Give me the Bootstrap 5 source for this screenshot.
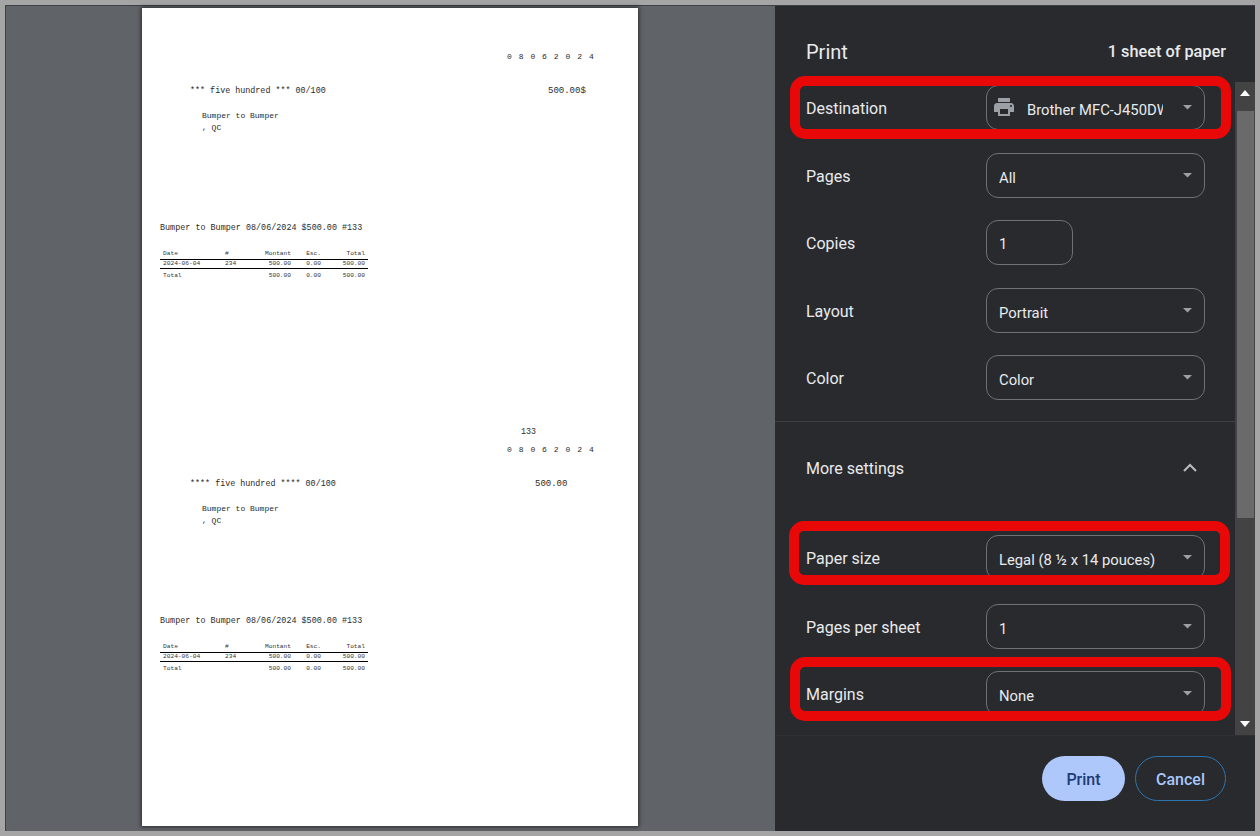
<!DOCTYPE html>
<html lang="en">
<head>
<meta charset="utf-8">
<title>Print</title>
<link href="https://cdn.jsdelivr.net/npm/bootstrap@5.3.0/dist/css/bootstrap.min.css" rel="stylesheet">
<style>
html, body { height: 100%; overflow: hidden; }
body { background: #a5a5a5; padding: 5px; font-family: Roboto, "Liberation Sans", sans-serif; }
.pv-window { height: 826px; width: 1250px; border-top: 1px solid #3d4045; border-left: 1px solid #3d4045; }
.pv-preview { width: 769px; background: #606368; padding-top: 2px; }
.pv-paper { width: 496px; height: 818px; margin-left: 136px; background: #fff; box-shadow: 0 0 4px 1px rgba(0,0,0,.55); padding-top: 25px; color: #2b2b2b; font-family: "Liberation Mono", "Courier New", monospace; font-size: 8.4px; line-height: 12px; }
.pv-check { height: 393px; }
.pv-num { height: 12px; padding-left: 379px; font-size: 8.3px; }
.pv-date { height: 12px; margin-top: 6px; padding-left: 365px; letter-spacing: 6.9px; font-size: 8px; white-space: pre; }
.pv-amount { margin-top: 22px; height: 12px; }
.pv-words { margin-left: 48px; width: 346px; }
.pv-sum1 { margin-left: 12px; font-size: 9px; }
.pv-sum2 { margin-left: -1px; font-size: 9px; }
.pv-to { margin-top: 13px; margin-left: 60px; height: 25px; line-height: 12px; font-size: 8px; }
.pv-memo { margin-top: 87px; margin-left: 18px; height: 12px; letter-spacing: .03px; }
.pv-table { margin: 16px 0 0 18px; width: 208px; table-layout: fixed; border-collapse: collapse; font-size: 6.2px; line-height: 8px; color: #333; }
.pv-table td, .pv-table th { padding: 0 3px; font-weight: 400; white-space: nowrap; height: 8.4px; }
.pv-table tbody tr { border-top: 1.4px solid #000; border-bottom: 1.4px solid #000; }
.pv-table thead th { padding-bottom: 1px; }
.pv-table tfoot td { padding-top: 3px; }
.pv-c1 { width: 62px; } .pv-c2 { width: 28px; } .pv-c3 { width: 44px; } .pv-c4 { width: 30px; } .pv-c5 { width: 44px; }
.pv-side { width: 480px; background: #292a2e; color: #e8eaed; }
.pv-head { height: 76px; padding: 29px 29px 0 31px; }
.pv-title { font-size: 20px; line-height: 34px; font-weight: 400; margin: 0; }
.pv-sheets { font-size: 16.3px; font-weight: 500; line-height: 34px; }
.pv-main { height: 654px; }
.pv-form { width: 460px; padding: 3.4px 30px 0 31px; }
.pv-row { height: 45px; margin-bottom: 22.5px; }
.pv-row label { width: 180px; font-size: 16px; line-height: 20px; margin: 0; padding-top: 3px; color: #e8eaed; }
.pv-row-paper { margin-bottom: 24px; }
.pv-row-sheet { margin-bottom: 22px; }
.pv-field { width: 219px; }
.pv-select.form-select, .pv-input.form-control { background-color: transparent; color: #e8eaed; border: 1px solid #6f7175; border-radius: 12px; height: 45px; font-family: Roboto, "Liberation Sans", sans-serif; font-size: 14.8px; padding: 5px 41px 0 12px; box-shadow: none; }
.pv-select.form-select { background-image: url("data:image/svg+xml,%3Csvg xmlns='http://www.w3.org/2000/svg' width='9' height='5'%3E%3Cpath d='M0 0h9L4.5 4.5z' fill='%239aa0a6'/%3E%3C/svg%3E"); background-repeat: no-repeat; background-position: right 12px top 19px; background-size: 9px 5px; }
.pv-select option { background: #292a2e; color: #e8eaed; }
.pv-select-icon.form-select { padding-left: 40px; }
.pv-input.form-control { width: 87px; padding: 2px 8px 0 12px; }
.pv-printer { position: absolute; left: 6px; top: 10px; width: 24px; height: 24px; fill: #9aa0a6; pointer-events: none; }
.pv-rule { margin: 21px -30px 0 -31px; border-top: 1px solid #3f4044; opacity: 1; }
.pv-more-inner { height: 113px; padding-bottom: 21px; }
.pv-more-inner span { font-size: 16px; padding-top: 2px; }
.pv-chev { width: 14px; height: 9px; margin: 0 8px 2px 0; fill: none; stroke: #b9bcc0; stroke-width: 2; }
.pv-mark { position: absolute; border: 10px solid #e80808; border-radius: 15px; z-index: 3; pointer-events: none; }
.pv-mark-a { left: -16px; right: -26px; top: -9px; height: 63px; }
.pv-mark-b { left: -17px; right: -25px; top: -14px; height: 64px; }
.pv-mark-c { left: -16px; right: -26px; top: -14px; height: 64px; }
.pv-bar { width: 20px; background: #434343; }
.pv-bar-btn { height: 29px; padding-top: 8px; }
.pv-bar-btn-b { height: 23px; margin-top: auto; padding-top: 9px; }
.pv-tri-up, .pv-tri-down { display: block; width: 0; height: 0; margin: 0 auto; border-left: 5px solid transparent; border-right: 5px solid transparent; }
.pv-tri-up { border-bottom: 6px solid #fff; }
.pv-tri-down { border-top: 6px solid #fff; }
.pv-thumb { height: 407px; margin: 0 1px 0 2px; background: #6a6a6a; }
.pv-foot { height: 96px; padding: 20px 29px 0 0; border-top: 1px solid #2f3034; gap: 10px; }
.pv-btn-print.btn, .pv-btn-cancel.btn { height: 45px; border-radius: 23px; font-size: 16px; font-weight: 500; padding: 3px 0 0; font-family: Roboto, "Liberation Sans", sans-serif; }
.pv-btn-print.btn { width: 83px; background: #aec8fb; color: #1f3b75; border: 0; }
.pv-btn-cancel.btn { width: 91px; background: transparent; color: #a8c7fa; border: 1px solid #2f74ad; }
</style>
</head>
<body>
<div class="pv-window d-flex">
  <div class="pv-preview">
    <div class="pv-paper">
      <div class="pv-check">
        <div class="pv-num"></div>
        <div class="pv-date">08062024</div>
        <div class="pv-amount d-flex"><span class="pv-words">*** five hundred *** 00/100</span><span class="pv-sum1">500.00$</span></div>
        <div class="pv-to">Bumper to Bumper<br>, QC</div>
        <div class="pv-memo">Bumper to Bumper 08/06/2024 $500.00 #133</div>
        <table class="pv-table">
          <colgroup><col class="pv-c1"><col class="pv-c2"><col class="pv-c3"><col class="pv-c4"><col class="pv-c5"></colgroup>
          <thead><tr><th>Date</th><th>#</th><th class="text-end">Montant</th><th class="text-end">Esc.</th><th class="text-end">Total</th></tr></thead>
          <tbody><tr><td>2024-06-04</td><td>234</td><td class="text-end">500.00</td><td class="text-end">0.00</td><td class="text-end">500.00</td></tr></tbody>
          <tfoot><tr><td>Total</td><td></td><td class="text-end">500.00</td><td class="text-end">0.00</td><td class="text-end">500.00</td></tr></tfoot>
        </table>
      </div>
      <div class="pv-check">
        <div class="pv-num">133</div>
        <div class="pv-date">08062024</div>
        <div class="pv-amount d-flex"><span class="pv-words">**** five hundred **** 00/100</span><span class="pv-sum2">500.00</span></div>
        <div class="pv-to">Bumper to Bumper<br>, QC</div>
        <div class="pv-memo">Bumper to Bumper 08/06/2024 $500.00 #133</div>
        <table class="pv-table">
          <colgroup><col class="pv-c1"><col class="pv-c2"><col class="pv-c3"><col class="pv-c4"><col class="pv-c5"></colgroup>
          <thead><tr><th>Date</th><th>#</th><th class="text-end">Montant</th><th class="text-end">Esc.</th><th class="text-end">Total</th></tr></thead>
          <tbody><tr><td>2024-06-04</td><td>234</td><td class="text-end">500.00</td><td class="text-end">0.00</td><td class="text-end">500.00</td></tr></tbody>
          <tfoot><tr><td>Total</td><td></td><td class="text-end">500.00</td><td class="text-end">0.00</td><td class="text-end">500.00</td></tr></tfoot>
        </table>
      </div>
    </div>
  </div>
  <div class="pv-side d-flex flex-column">
    <div class="pv-head d-flex justify-content-between">
      <h1 class="pv-title">Print</h1>
      <span class="pv-sheets">1 sheet of paper</span>
    </div>
    <div class="pv-main d-flex">
      <div class="pv-form">
        <div class="pv-row d-flex align-items-center position-relative">
          <label>Destination</label>
          <div class="pv-field position-relative">
            <select class="form-select pv-select pv-select-icon"><option>Brother MFC-J450DW</option></select>
            <svg class="pv-printer" viewBox="0 0 24 24"><path d="M19 8H5c-1.66 0-3 1.34-3 3v6h4v4h12v-4h4v-6c0-1.66-1.34-3-3-3zm-3 11H8v-5h8v5zm3-7c-.55 0-1-.45-1-1s.45-1 1-1 1 .45 1 1-.45 1-1 1zm-1-9H6v4h12V3z"/></svg>
          </div>
          <div class="pv-mark pv-mark-a"></div>
        </div>
        <div class="pv-row d-flex align-items-center">
          <label>Pages</label>
          <div class="pv-field"><select class="form-select pv-select"><option>All</option></select></div>
        </div>
        <div class="pv-row d-flex align-items-center">
          <label>Copies</label>
          <div class="pv-field"><input class="form-control pv-input" value="1"></div>
        </div>
        <div class="pv-row d-flex align-items-center">
          <label>Layout</label>
          <div class="pv-field"><select class="form-select pv-select"><option>Portrait</option></select></div>
        </div>
        <div class="pv-row d-flex align-items-center mb-0">
          <label>Color</label>
          <div class="pv-field"><select class="form-select pv-select"><option>Color</option></select></div>
        </div>
        <hr class="pv-rule">
        <div class="pv-more-inner d-flex align-items-center justify-content-between">
          <span>More settings</span>
          <svg class="pv-chev" viewBox="0 0 14 9"><path d="M1 8l6-6 6 6"/></svg>
        </div>
        <div class="pv-row pv-row-paper d-flex align-items-center position-relative">
          <label>Paper size</label>
          <div class="pv-field"><select class="form-select pv-select"><option>Legal (8 ½ x 14 pouces)</option></select></div>
          <div class="pv-mark pv-mark-b"></div>
        </div>
        <div class="pv-row pv-row-sheet d-flex align-items-center">
          <label>Pages per sheet</label>
          <div class="pv-field"><select class="form-select pv-select"><option>1</option></select></div>
        </div>
        <div class="pv-row d-flex align-items-center position-relative mb-0">
          <label>Margins</label>
          <div class="pv-field"><select class="form-select pv-select"><option>None</option></select></div>
          <div class="pv-mark pv-mark-c"></div>
        </div>
      </div>
      <div class="pv-bar d-flex flex-column">
        <div class="pv-bar-btn"><span class="pv-tri-up"></span></div>
        <div class="pv-thumb"></div>
        <div class="pv-bar-btn-b"><span class="pv-tri-down"></span></div>
      </div>
    </div>
    <div class="pv-foot d-flex justify-content-end align-items-start">
      <button type="button" class="btn pv-btn-print">Print</button>
      <button type="button" class="btn pv-btn-cancel">Cancel</button>
    </div>
  </div>
</div>
<script src="https://cdn.jsdelivr.net/npm/bootstrap@5.3.0/dist/js/bootstrap.bundle.min.js"></script>
</body>
</html>
